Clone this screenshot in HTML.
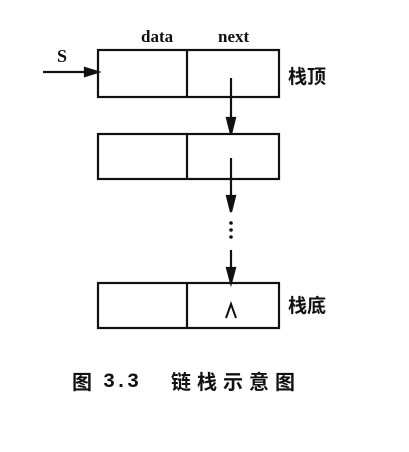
<html><head><style>
body{margin:0;background:#fff;width:409px;height:452px;overflow:hidden;position:relative}
span{position:absolute;white-space:nowrap;color:#111;line-height:24px}
.b{font-family:"Liberation Serif",serif;font-weight:bold;font-size:17px}
.c{font-family:"Liberation Sans","Noto Sans CJK SC",sans-serif;font-weight:bold;font-size:19px}
.k{font-family:"Liberation Sans","Noto Sans CJK SC",sans-serif;font-size:20px;font-weight:bold}
</style></head><body>
<svg width="409" height="452" style="position:absolute;left:0;top:0" stroke="#111" stroke-width="2.2" fill="none">
<rect x="98" y="50" width="181" height="47"/><line x1="187" y1="50" x2="187" y2="97"/>
<rect x="98" y="134" width="181" height="45"/><line x1="187" y1="134" x2="187" y2="179"/>
<rect x="98" y="283" width="181" height="45"/><line x1="187" y1="283" x2="187" y2="328"/>
<line x1="43" y1="72" x2="92" y2="72"/><path d="M85 68 L98 72 L85 76Z" fill="#111"/>
<line x1="231" y1="78" x2="231" y2="126"/><path d="M227 118 L231 134 L235 118Z" fill="#111"/>
<line x1="231" y1="158" x2="231" y2="204"/><path d="M227 196 L231 212 L235 196Z" fill="#111"/>
<line x1="231" y1="250" x2="231" y2="276"/><path d="M227 268 L231 283 L235 268Z" fill="#111"/>
<g fill="#111" stroke="none"><circle cx="231" cy="223" r="1.8"/><circle cx="231" cy="230" r="1.8"/><circle cx="231" cy="237" r="1.8"/></g>
<path d="M226 318 L231 304 L236 318" stroke-width="2"/>
</svg>
<span class="b" style="left:141px;top:25px">data</span>
<span class="b" style="left:218px;top:25px">next</span>
<span class="b" style="left:57px;top:44px;font-size:18px">S</span>
<span class="c" style="left:288px;top:66px">栈顶</span>
<span class="c" style="left:288px;top:295px">栈底</span>
<span class="k" style="left:72px;top:371px">图</span>
<span class="k" style="left:103px;top:371px;font-family:'Liberation Mono',monospace;letter-spacing:0px">3.3</span>
<span class="k" style="left:171px;top:371px;letter-spacing:6px">链栈示意图</span>
</body></html>
